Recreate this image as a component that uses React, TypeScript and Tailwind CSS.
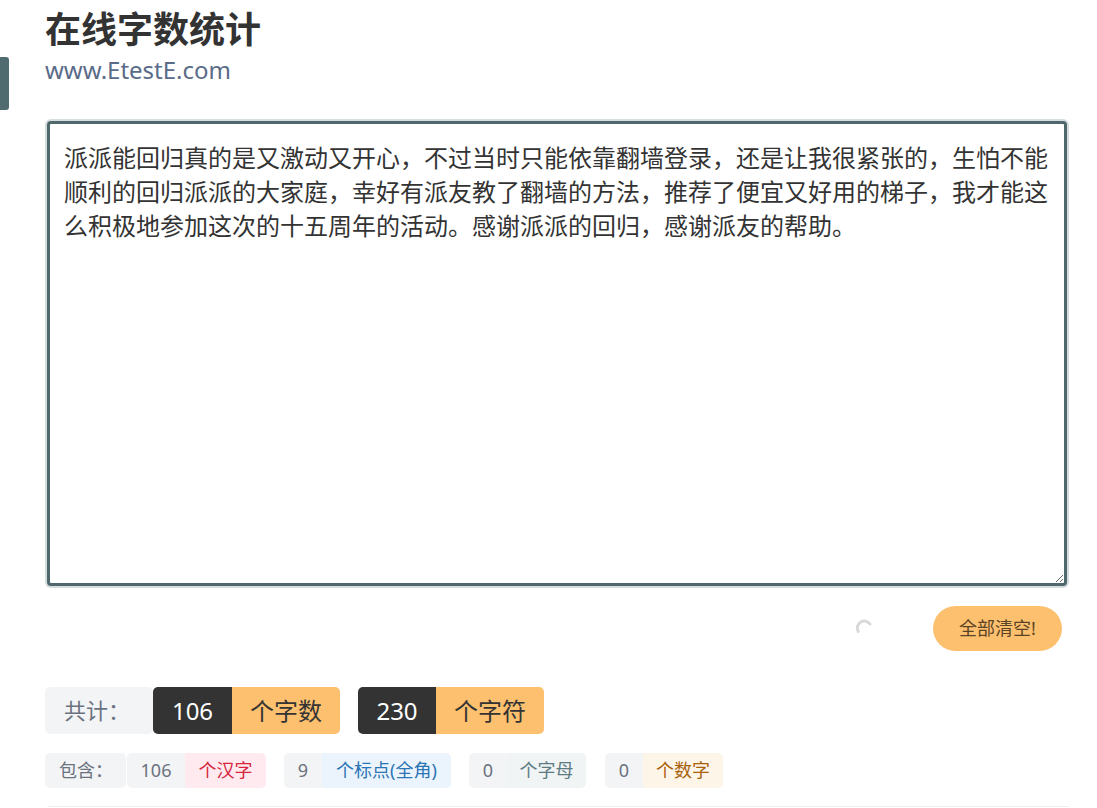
import { useState } from 'react';

const initialText =
    '派派能回归真的是又激动又开心，不过当时只能依靠翻墙登录，还是让我很紧张的，生怕不能顺利的回归派派的大家庭，幸好有派友教了翻墙的方法，推荐了便宜又好用的梯子，我才能这么积极地参加这次的十五周年的活动。感谢派派的回归，感谢派友的帮助。';

export default function App() {
    const [text, setText] = useState(initialText);

    return (
        <div className="relative min-h-screen bg-white font-['Noto_Sans','Noto_Sans_CJK_SC',sans-serif]">
            {/* side tab */}
            <div className="absolute left-0 top-[57px] h-[53px] w-[9px] rounded-r-[3px] bg-[#4f6b6f]" />

            <div className="w-[1069px] pl-[45px]">
                <h1 className="pt-[8px] text-[36px] font-bold leading-[44px] text-[#333]">在线字数统计</h1>
                <div className="mt-[4px] text-[24px] leading-[28px] text-[#5a6b88]">www.EtestE.com</div>

                <div className="mt-[35px] rounded-[6px] bg-[#d5dddf] p-[2px]">
                    <textarea
                        value={text}
                        onChange={e => setText(e.target.value)}
                        className="block h-[465px] w-full rounded-[4px] border-[3px] border-[#4e686c] bg-white px-[14px] pt-[17px] text-[24px] leading-[34px] text-[#333] outline-none"
                    />
                </div>

                <div className="mt-[18px] flex items-center justify-end pr-[7px]">
                    <svg className="mr-[58px] h-[20px] w-[20px]" viewBox="0 0 20 20" fill="none">
                        <path d="M3.2 12.5 A7 7 0 0 1 15 5" stroke="#d9d9d9" strokeWidth="3" strokeLinecap="round" />
                    </svg>
                    <button
                        onClick={() => setText('')}
                        className="h-[45px] w-[129px] rounded-full bg-[#fdc06f] text-[18px] text-[#5b4325]"
                    >
                        全部清空!
                    </button>
                </div>

                <div className="mt-[36px] flex h-[47px] items-stretch">
                    <div className="flex w-[108px] items-center rounded-[5px] bg-[#f3f4f5] pl-[19px] text-[22px] text-[#6b7280]">
                        共计：
                    </div>
                    <div className="flex w-[79px] items-center justify-center rounded-l-[5px] bg-[#333] text-[24px] text-white">
                        106
                    </div>
                    <div className="flex w-[108px] items-center justify-center rounded-r-[5px] bg-[#fdc06f] text-[24px] text-[#333]">
                        个字数
                    </div>
                    <div className="ml-[18px] flex w-[78px] items-center justify-center rounded-l-[5px] bg-[#333] text-[24px] text-white">
                        230
                    </div>
                    <div className="flex w-[108px] items-center justify-center rounded-r-[5px] bg-[#fdc06f] text-[24px] text-[#333]">
                        个字符
                    </div>
                </div>

                <div className="mt-[19px] flex h-[35px] items-stretch text-[18px]">
                    <div className="flex w-[81px] items-center rounded-[5px] bg-[#f3f4f5] pl-[14px] text-[#6b7280]">包含：</div>
                    <div className="ml-[1px] flex w-[58px] items-center justify-center rounded-l-[5px] bg-[#f3f4f5] text-[#6b7280]">
                        106
                    </div>
                    <div className="flex w-[81px] items-center justify-center rounded-r-[5px] bg-[#ffeaf0] text-[#d7263d]">
                        个汉字
                    </div>

                    <div className="ml-[18px] flex w-[38px] items-center justify-center rounded-l-[5px] bg-[#f3f4f5] text-[#6b7280]">
                        9
                    </div>
                    <div className="flex w-[129px] items-center justify-center rounded-r-[5px] bg-[#ebf4fc] text-[#2b75b5]">
                        个标点(全角)
                    </div>

                    <div className="ml-[18px] flex w-[38px] items-center justify-center rounded-l-[5px] bg-[#f3f4f5] text-[#6b7280]">
                        0
                    </div>
                    <div className="flex w-[79px] items-center justify-center rounded-r-[5px] bg-[#f0f4f5] text-[#5d7b82]">
                        个字母
                    </div>

                    <div className="ml-[19px] flex w-[38px] items-center justify-center rounded-l-[5px] bg-[#f3f4f5] text-[#6b7280]">
                        0
                    </div>
                    <div className="flex w-[80px] items-center justify-center rounded-r-[5px] bg-[#fef5e9] text-[#a9620c]">
                        个数字
                    </div>
                </div>

                <div className="ml-[3px] mt-[18px] border-t border-[#eeeeee]" />
            </div>
        </div>
    );
}
